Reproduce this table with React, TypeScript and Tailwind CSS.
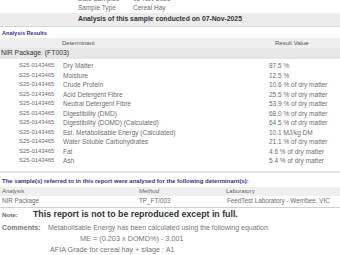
import React from 'react'

const rows = [
  ['Dry Matter', '87.5 %'],
  ['Moisture', '12.5 %'],
  ['Crude Protein', '10.6 % of dry matter'],
  ['Acid Detergent Fibre', '25.5 % of dry matter'],
  ['Neutral Detergent Fibre', '53.9 % of dry matter'],
  ['Digestibility (DMD)', '68.0 % of dry matter'],
  ['Digestibility (DOMD) (Calculated)', '64.5 % of dry matter'],
  ['Est. Metabolisable Energy (Calculated)', '10.1 MJ/kg DM'],
  ['Water Soluble Carbohydrates', '21.1 % of dry matter'],
  ['Fat', '4.6 % of dry matter'],
  ['Ash', '5.4 % of dry matter'],
]

function App() {
  return (
    <div className="w-[340px] h-[255px] overflow-hidden bg-white font-['Liberation_Sans',Arial,sans-serif] text-[#6e6e6e]">
      {/* sample details (scrolled) */}
      <div className="-mt-[6px] flex flex-col text-[6.5px] leading-[9px]">
        <div className="flex pl-[78px]">
          <span className="w-[55px]">Date Sampled</span>
          <span>05-Nov-2025</span>
        </div>
        <div className="flex pl-[78px]">
          <span className="w-[55px]">Sample Type</span>
          <span>Cereal Hay</span>
        </div>
      </div>

      <div className="mt-[1px] h-[14px] flex items-center pl-[78px] bg-[#ececec] border-b border-[#d6d6d6] text-[6.8px] font-bold text-[#333]">
        Analysis of this sample conducted on 07-Nov-2025
      </div>

      <div className="mt-[2px] pl-[2px] text-[5.6px] leading-[9px] font-bold text-[#33338a]">Analysis Results</div>

      <div className="h-[10px] flex items-center bg-[#efefef] text-[6px] text-[#555]">
        <span className="pl-[62px] w-[275px]">Determinant</span>
        <span>Result Value</span>
      </div>
      <div className="h-[11px] flex items-center pl-[1px] bg-[#e6e6e6] text-[6.8px] text-[#333]">
        NIR Package&nbsp;&nbsp;(FT003)
      </div>

      <div className="mt-[2px] flex flex-col text-[6.5px] leading-[9.5px]">
        {rows.map(([name, value]) => (
          <div key={name} className="flex pl-[19px]">
            <span className="w-[44px] text-[5.9px]">S25-0143465</span>
            <span className="w-[206px]">{name}</span>
            <span>{value}</span>
          </div>
        ))}
      </div>

      <div className="mt-[5px] h-[2px] bg-[#e4e4e4]"></div>

      <div className="mt-[4px] pl-[2px] text-[6px] leading-[9px] font-bold text-[#33338a]">
        The sample(s) referred to in this report were analysed for the following determinant(s):
      </div>
      <div className="mt-[1px] h-[9px] flex items-center bg-[#efefef] text-[6px] italic text-[#666]">
        <span className="pl-[2px] w-[139px]">Analysis</span>
        <span className="w-[87px]">Method</span>
        <span className="not-italic">Laboratory</span>
      </div>
      <div className="h-[12px] flex items-center text-[6.3px] border-b border-[#d0d0d0]">
        <span className="pl-[2px] w-[139px]">NIR Package</span>
        <span className="w-[88px]">TP_FT/003</span>
        <span>FeedTest Laboratory - Werribee, VIC</span>
      </div>

      <div className="mt-[2px] flex items-center h-[11px]">
        <span className="pl-[2px] w-[33px] text-[6.2px] font-bold text-[#666]">Note:</span>
        <span className="text-[8.8px] font-bold text-[#333]">This report is not to be reproduced except in full.</span>
      </div>
      <div className="mt-[2px] flex h-[11px] items-center">
        <span className="pl-[2px] w-[48px] text-[7px] font-bold text-[#777]">Comments:</span>
        <span className="text-[7px] text-[#777]">Metabolisable Energy has been calculated using the following equation:</span>
      </div>
      <div className="pl-[80px] text-[7.3px] leading-[9px] text-[#777]">ME = (0.203 x DOMD%) - 3.001</div>
      <div className="mt-[2px] pl-[50px] text-[7.2px] leading-[9px] text-[#777]">AFIA Grade for cereal hay + silage : A1</div>
    </div>
  )
}

export default App
